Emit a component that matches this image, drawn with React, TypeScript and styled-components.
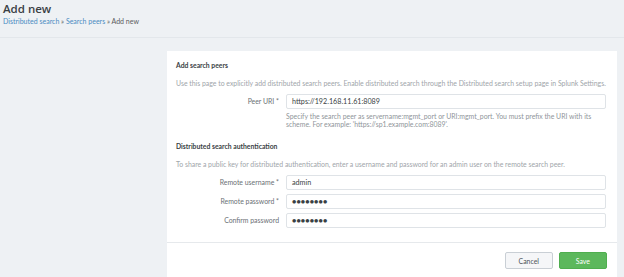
import React from "react";
import styled, { createGlobalStyle } from "styled-components";

const Global = createGlobalStyle`
  html, body { margin: 0; padding: 0; }
  body {
    background: #eef1f4;
    font-family: Lato, "Open Sans", "Liberation Sans", sans-serif;
    color: #3c444d;
    width: 624px;
    height: 277px;
    overflow: hidden;
  }
  * { box-sizing: border-box; }
`;

const Page = styled.div`
  display: flex;
  flex-direction: column;
  height: 277px;
`;

const Header = styled.header`
  padding: 1px 3px 0;
  height: 38px;
  border-bottom: 1px solid #e3e7eb;
`;

const Title = styled.h1`
  margin: 0;
  font-family: "Open Sans", Lato, sans-serif;
  font-size: 11.5px;
  line-height: 15px;
  font-weight: 600;
  color: #3a3f44;
`;

const Crumbs = styled.nav`
  margin-top: 1px;
  font-size: 7px;
  line-height: 9px;
  color: #5c5c5c;
`;

const Crumb = styled.a`
  color: #4a8bc2;
  text-decoration: none;
`;

const Body = styled.div`
  flex: 1;
  display: flex;
  padding: 13px 8px 0 167px;
`;

const Card = styled.section`
  flex: 1;
  background: #fff;
  display: flex;
  flex-direction: column;
`;

const Content = styled.div`
  padding: 9px 11px 14px 9px;
`;

const SectionTitle = styled.h2<{ $gap?: number }>`
  margin: ${(p) => p.$gap ?? 0}px 0 0;
  font-size: 6.8px;
  line-height: 10px;
  font-weight: 700;
  color: #3a3f44;
`;

const Desc = styled.p`
  margin: 8px 0 6px;
  font-size: 6.9px;
  line-height: 10px;
  color: #a0a5aa;
  white-space: nowrap;
`;

const Rows = styled.div`
  display: flex;
  flex-direction: column;
  gap: 4px;
`;

const Row = styled.div`
  display: grid;
  grid-template-columns: 103px 1fr;
  column-gap: 7px;
  align-items: start;
`;

const Label = styled.label`
  text-align: right;
  font-size: 6.9px;
  line-height: 15px;
  color: #6b7075;
`;

const Field = styled.div`
  display: flex;
  flex-direction: column;
`;

const Input = styled.div<{ $secret?: boolean }>`
  height: 15px;
  border: 1px solid #dfe3e7;
  border-radius: 2px;
  padding: 0 5px;
  display: flex;
  align-items: center;
  font-size: 7.2px;
  letter-spacing: ${(p) => (p.$secret ? "0.1px" : "0")};
  color: #3a3f44;
  background: #fff;
`;

const Help = styled.p`
  margin: 3px 0 0;
  font-size: 6.9px;
  line-height: 8px;
  color: #8f959a;
`;

const Footer = styled.footer`
  flex: 1;
  border-top: 1px solid #e6e9ec;
  display: flex;
  justify-content: flex-end;
  align-items: flex-start;
  gap: 6px;
  padding: 9px 10px 0 0;
`;

const Button = styled.button<{ $primary?: boolean }>`
  width: 48px;
  height: 17px;
  border-radius: 2px;
  font-family: inherit;
  font-size: 6.9px;
  padding: 0;
  cursor: pointer;
  color: ${(p) => (p.$primary ? "#fff" : "#4d5358")};
  background: ${(p) => (p.$primary ? "#5cb85c" : "#f5f6f8")};
  border: 1px solid ${(p) => (p.$primary ? "#4fae4f" : "#c9cfd5")};
`;

export default function App() {
  return (
    <Page>
      <Global />
      <Header>
        <Title>Add new</Title>
        <Crumbs>
          <Crumb href="#">Distributed search</Crumb> » <Crumb href="#">Search peers</Crumb> » Add new
        </Crumbs>
      </Header>
      <Body>
        <Card>
          <Content>
            <SectionTitle>Add search peers</SectionTitle>
            <Desc>
              Use this page to explicitly add distributed search peers. Enable distributed search through the
              Distributed search setup page in Splunk Settings.
            </Desc>
            <Row>
              <Label>Peer URI *</Label>
              <Field>
                <Input>https://192.168.11.61:8089</Input>
                <Help>
                  Specify the search peer as servername:mgmt_port or URI:mgmt_port. You must prefix the URI with its
                  scheme. For example: 'https://sp1.example.com:8089'.
                </Help>
              </Field>
            </Row>
            <SectionTitle $gap={13}>Distributed search authentication</SectionTitle>
            <Desc>
              To share a public key for distributed authentication, enter a username and password for an admin user on
              the remote search peer.
            </Desc>
            <Rows>
              <Row>
                <Label>Remote username *</Label>
                <Input>admin</Input>
              </Row>
              <Row>
                <Label>Remote password *</Label>
                <Input $secret>●●●●●●●●</Input>
              </Row>
              <Row>
                <Label>Confirm password</Label>
                <Input $secret>●●●●●●●●</Input>
              </Row>
            </Rows>
          </Content>
          <Footer>
            <Button>Cancel</Button>
            <Button $primary>Save</Button>
          </Footer>
        </Card>
      </Body>
    </Page>
  );
}
